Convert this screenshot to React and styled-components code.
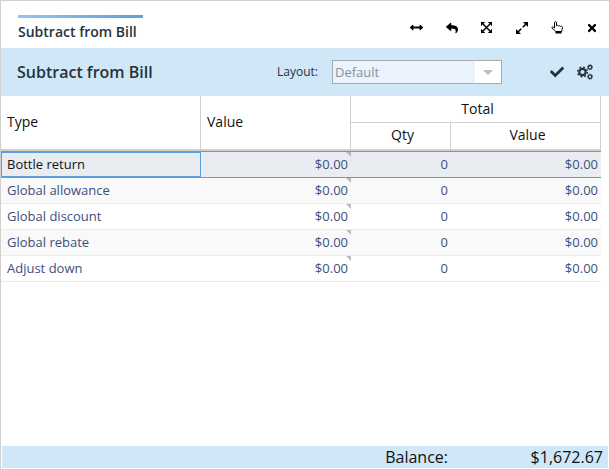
import React from "react";
import styled, { createGlobalStyle, css } from "styled-components";
import { FaArrowsAltH, FaReply, FaTimes, FaCheck } from "react-icons/fa";

const GlobalStyle = createGlobalStyle`
  *, *::before, *::after { box-sizing: border-box; }
  body {
    margin: 0;
    background: #fff;
    font-family: "Open Sans", "Noto Sans", sans-serif;
    font-size: 13px;
  }
`;

const Panel = styled.main`
  display: flex;
  flex-direction: column;
  min-height: 100vh;
  border: 1px solid #d0d0d0;
`;

const TabBar = styled.header`
  display: flex;
  justify-content: space-between;
  height: 47px;
  padding-left: 17px;
`;

const Tab = styled.button`
  align-self: flex-start;
  margin-top: 14px;
  padding: 5px 6px 0 0;
  border: 0;
  border-top: 3px solid;
  border-image: linear-gradient(to right, #98c4ec, #5b9fde) 1;
  background: none;
  color: #26323c;
  font: 600 14px/18px "Open Sans", sans-serif;
  white-space: nowrap;
`;

const WindowTools = styled.nav`
  display: flex;
  align-items: center;
  padding-top: 6px;
`;

const IconButton = styled.button`
  display: flex;
  align-items: center;
  justify-content: center;
  width: ${(p) => p.$width || 35}px;
  height: 28px;
  padding: 0;
  border: 0;
  background: none;
  color: ${(p) => p.$color || "#000"};
`;

const TitleBar = styled.section`
  display: flex;
  align-items: center;
  height: 48px;
  padding: 0 10px 0 16px;
  background: #d0e7f7;
  color: #26323c;
`;

const Title = styled.h1`
  flex: 0 0 260px;
  margin: 0;
  font-size: 16px;
  font-weight: 600;
  line-height: 20px;
`;

const LayoutLabel = styled.label`
  flex: 0 0 55px;
  font-size: 12px;
  line-height: 18px;
`;

const SelectBox = styled.div`
  display: flex;
  position: relative;
  width: 170px;
  height: 24px;
  border: 1px solid #aaa9ad;
  background: linear-gradient(to left, #fff 26px, #ebf4fc 26px);
`;

const Select = styled.select`
  flex: 1;
  padding: 0 28px 0 2px;
  border: 0;
  appearance: none;
  background: none;
  color: #83929c;
  font: 13px/22px "Open Sans", sans-serif;
  opacity: 1;
`;

const Caret = styled.span`
  position: absolute;
  top: 9px;
  right: 8px;
  border: 5px solid transparent;
  border-top-color: #bdbdbd;
  border-bottom: 0;
  pointer-events: none;
`;

const TitleActions = styled.div`
  display: flex;
  margin-left: auto;
`;

const Grid = styled.table`
  width: calc(100% - 8px);
  table-layout: fixed;
  border-collapse: separate;
  border-spacing: 0;
`;

const Col = styled.col`
  width: ${(p) => (p.$width ? `${p.$width}px` : "auto")};
`;

const Heading = styled.th`
  height: ${(p) => (p.$top ? 27 : 28)}px;
  padding: ${(p) => (p.$top ? "0 2px 0 6px" : p.$center ? "0 2px 2px 6px" : "0 6px 2px")};
  border-right: 1px solid #d0d0d0;
  border-bottom: ${(p) => (p.$top ? 1 : 2)}px solid #d0d0d0;
  color: #111;
  font-size: 14px;
  font-weight: 400;
  line-height: 20px;
  text-align: ${(p) => (p.$center ? "center" : "left")};
`;

const Row = styled.tr`
  background: ${(p) => (p.$selected ? "#e9edf2" : p.$striped ? "#f9f9f9" : "#fff")};
`;

const Cell = styled.td`
  position: relative;
  height: 26px;
  padding: 0 3px 2px 6px;
  border-bottom: 1px solid #ebebeb;
  color: #3d4f7c;
  font-size: 13px;
  line-height: 18px;
  text-align: ${(p) => (p.$numeric ? "right" : "left")};

  ${(p) =>
    p.$selected &&
    css`
      height: 27px;
      border-top: 1px solid #5b9fde;
      border-bottom-color: #5b9fde;
    `}

  ${(p) =>
    p.$current &&
    css`
      color: #111;
      box-shadow: inset 0 0 0 1px #5b9fde;
    `}

  ${(p) =>
    p.$editable &&
    css`
      &::after {
        content: "";
        position: absolute;
        top: 0;
        right: 0;
        border-top: 5px solid #bfb8b8;
        border-left: 5px solid transparent;
      }
    `}
`;

const Footer = styled.footer`
  display: grid;
  grid-template-columns: 1fr 155px;
  height: 22px;
  margin: auto 1px 1px;
  padding-right: 5px;
  background: #d0e7f7;
  color: #111;
  font-size: 16px;
  line-height: 22px;
  text-align: right;
`;

function MaximizeIcon() {
  return (
    <svg width="11" height="11" viewBox="0 0 11 11" fill="currentColor">
      <path d="M2 2l7 7M9 2l-7 7" stroke="currentColor" strokeWidth="1.5" />
      <path d="M0 0h4.2L0 4.2zM11 0v4.2L6.8 0zM0 11V6.8L4.2 11zM11 11H6.8L11 6.8z" />
    </svg>
  );
}

function ExpandIcon() {
  return (
    <svg width="12" height="12" viewBox="0 0 12 12" fill="currentColor">
      <path d="M2 10l3.2-3.2M6.8 5.2L10 2" stroke="currentColor" strokeWidth="1.6" />
      <path d="M12 0v5L7 0zM0 12V7l5 5z" />
    </svg>
  );
}

function HandIcon() {
  return (
    <svg width="12" height="13" viewBox="0 0 12 13" fill="none" stroke="currentColor" strokeLinejoin="round">
      <path d="M3.5 7V1.7c0-1.5 2-1.5 2 0v3c.7-.6 1.6-.4 2 .3.7-.5 1.600-.2 2 .4.900-.4 2 0 2 1.100 0 1.800-.8 2.400-.9 4H4.700C4.100 9.200 2.600 8.800 1 7.200.3 6.200 1.700 5.200 3.500 7z" />
      <path d="M4.500 10.500h6v2h-6z" fill="currentColor" stroke="none" />
    </svg>
  );
}

function CogsIcon() {
  return (
    <svg width="16" height="16" viewBox="0 0 16 16" fill="none" stroke="currentColor">
      <circle cx="5.5" cy="8" r="3.2" strokeWidth="2.2" />
      <circle cx="5.5" cy="8" r="4.9" strokeWidth="1.4" strokeDasharray="1.92 1.928" />
      <circle cx="13" cy="3.3" r="1.8" strokeWidth="1.3" />
      <circle cx="13" cy="3.3" r="2.6" strokeWidth="0.8" strokeDasharray="1.02 1.022" />
      <circle cx="13" cy="12.7" r="1.8" strokeWidth="1.3" />
      <circle cx="13" cy="12.7" r="2.6" strokeWidth="0.8" strokeDasharray="1.02 1.022" />
    </svg>
  );
}

const tools = [
  ["Fit width", FaArrowsAltH, 13],
  ["Back", FaReply, 12],
  ["Maximize", MaximizeIcon],
  ["Expand", ExpandIcon],
  ["Touch mode", HandIcon],
  ["Close", FaTimes, 12],
];

const rows = ["Bottle return", "Global allowance", "Global discount", "Global rebate", "Adjust down"].map(
  (type) => ({ type, value: "$0.00", qty: 0, total: "$0.00" })
);

export default function App() {
  return (
    <>
      <GlobalStyle />
      <Panel>
        <TabBar>
          <Tab type="button">Subtract from Bill</Tab>
          <WindowTools>
            {tools.map(([label, Icon, size]) => (
              <IconButton key={label} type="button" aria-label={label}>
                <Icon size={size} />
              </IconButton>
            ))}
          </WindowTools>
        </TabBar>
        <TitleBar>
          <Title>Subtract from Bill</Title>
          <LayoutLabel htmlFor="layout">Layout:</LayoutLabel>
          <SelectBox>
            <Select id="layout" disabled defaultValue="Default">
              <option>Default</option>
            </Select>
            <Caret />
          </SelectBox>
          <TitleActions>
            <IconButton type="button" aria-label="Apply" $width={28} $color="#26323c">
              <FaCheck size={14} />
            </IconButton>
            <IconButton type="button" aria-label="Settings" $width={28} $color="#26323c">
              <CogsIcon />
            </IconButton>
          </TitleActions>
        </TitleBar>
        <Grid>
          <colgroup>
            <Col $width={200} />
            <Col $width={150} />
            <Col $width={100} />
            <Col />
          </colgroup>
          <thead>
            <tr>
              <Heading rowSpan={2}>Type</Heading>
              <Heading rowSpan={2}>Value</Heading>
              <Heading colSpan={2} $top $center>Total</Heading>
            </tr>
            <tr>
              <Heading $center>Qty</Heading>
              <Heading $center>Value</Heading>
            </tr>
          </thead>
          <tbody>
            {rows.map((row, i) => {
              const selected = i === 0;
              return (
                <Row key={row.type} $selected={selected} $striped={i % 2 === 1}>
                  <Cell $selected={selected} $current={selected}>{row.type}</Cell>
                  <Cell $selected={selected} $numeric $editable>{row.value}</Cell>
                  <Cell $selected={selected} $numeric>{row.qty}</Cell>
                  <Cell $selected={selected} $numeric>{row.total}</Cell>
                </Row>
              );
            })}
          </tbody>
        </Grid>
        <Footer>
          <span>Balance:</span>
          <span>$1,672.67</span>
        </Footer>
      </Panel>
    </>
  );
}
